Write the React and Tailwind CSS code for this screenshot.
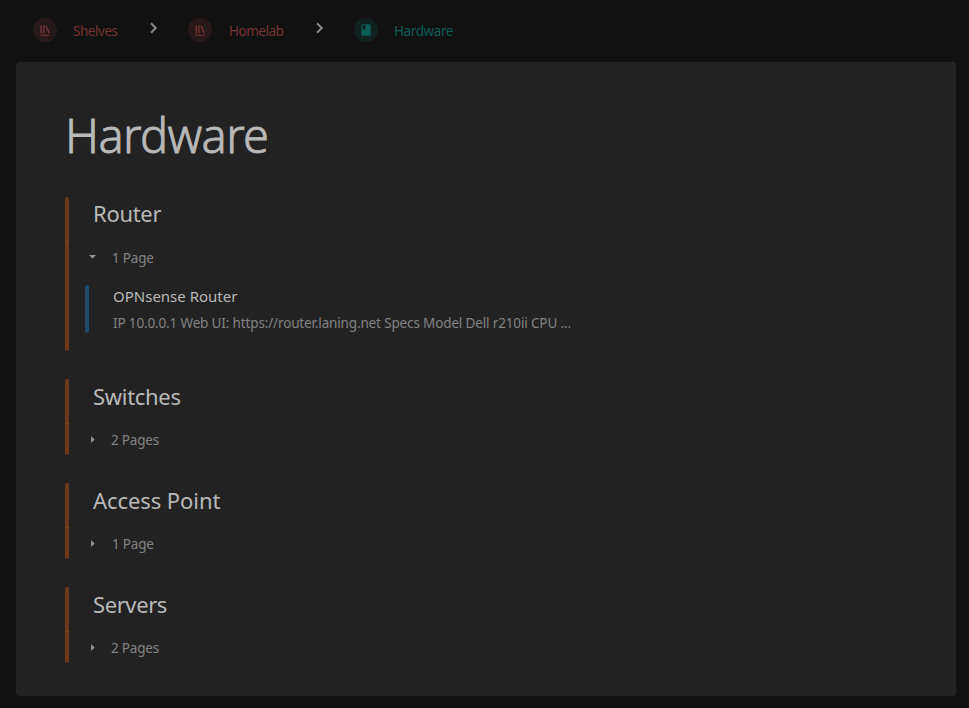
const ShelfIcon = () => (
  <svg viewBox="0 0 24 24" className="size-3.5" fill="currentColor">
    <path d="M4 20.058h15.892V22H4zM6.658 3.643V18h-2.38V3.643zM11.326 3.643V18H8.947V3.643zM14.722 3.856l5.613 13.214-2.19.93-5.613-13.214z" />
  </svg>
);

const BookIcon = () => (
  <svg viewBox="0 0 24 24" className="size-3.5" fill="currentColor">
    <path d="M18 2H6c-1.1 0-2 .9-2 2v16c0 1.1.9 2 2 2h12c1.1 0 2-.9 2-2V4c0-1.1-.9-2-2-2zM6 4h5v8l-2.5-1.5L6 12V4z" />
  </svg>
);

const Chevron = ({ className }) => (
  <svg viewBox="0 0 24 24" className={`h-[22px] w-[21px] -translate-y-0.5 ${className}`} fill="#8c8c8c" stroke="#8c8c8c" strokeWidth="0.4">
    <path d="M10 6 8.59 7.41 13.17 12l-4.58 4.59L10 18l6-6z" />
  </svg>
);

const Crumb = ({ icon, label, color, circle, text }) => (
  <a className={`flex items-center ${color}`}>
    <span className={`flex size-6 items-center justify-center rounded-full ${circle}`}>{icon}</span>
    <span className={`mt-px whitespace-nowrap text-[13.5px] leading-5 ${text}`}>{label}</span>
  </a>
);

const Chapter = ({ title, titleStyle, count, countStyle, open, children }) => (
  <section className="flex">
    <div className="flex w-1 flex-col">
      <div className="h-11 rounded-t-xs bg-[#6d3819]" />
      <div className="h-px bg-[#86400f]" />
      <div className="flex-1 rounded-b-xs bg-[#6d3819]" />
    </div>
    <div className="flex-1">
      <h2 className={`ml-6 h-11 whitespace-nowrap text-[22px] text-[#b9b9b9] ${titleStyle}`}>{title}</h2>
      <div className="ml-[15px] flex h-8 items-center text-[#838383]">
        <svg viewBox="0 0 24 24" className={`size-[17px] ${open ? "-translate-y-px rotate-90" : ""}`} fill="#919191">
          <path d="m10 17 5-5-5-5z" />
        </svg>
        <span className={`mt-0.5 whitespace-nowrap text-[13.5px] leading-5 ${countStyle}`}>{count}</span>
      </div>
      {children}
    </div>
  </section>
);

export default function App() {
  return (
    <div className="h-[708px] w-[969px] overflow-hidden bg-[#111] font-['Noto_Sans','Open_Sans',sans-serif]">
      <nav className="flex h-[62px] items-center pb-0.5 pl-[33px]">
        <Crumb icon={<ShelfIcon />} label="Shelves" color="text-[#773333]" circle="bg-[#271819]" text="ml-4 w-[46px] tracking-[-0.45px]" />
        <Chevron className="ml-6" />
        <Crumb icon={<ShelfIcon />} label="Homelab" color="ml-6 text-[#773333]" circle="bg-[#271819]" text="ml-[17px] w-[55px] tracking-[-0.5px]" />
        <Chevron className="ml-[25px]" />
        <Crumb icon={<BookIcon />} label="Hardware" color="ml-6 text-[#0b5e55]" circle="bg-[#11211f]" text="ml-4 w-[60px] tracking-[-0.4px]" />
      </nav>
      <main className="ml-4 h-[634px] w-[940px] rounded-[3px] bg-[#222] pl-[49px] pt-10">
        <h1 className="h-[95px] whitespace-nowrap text-[47px] font-light leading-[66px] tracking-[-0.6px] text-[#b9b9b9] [-webkit-text-stroke:0.8px_#b9b9b9]">Hardware</h1>
        <div className="flex flex-col gap-7">
          <Chapter title="Router" titleStyle="leading-8 tracking-[-0.3px]" count="1 Page" countStyle="ml-[11px] tracking-[-0.2px]" open>
            <div className="mb-[18px] ml-4 mt-3 flex h-12">
              <div className="w-1 rounded-xs bg-[#214a69]" />
              <div className="ml-6 whitespace-nowrap">
                <h3 className="text-[15px] leading-[22px] text-[#b9b9b9]">OPNsense Router</h3>
                <p className="mt-1 text-[13.5px] leading-6 tracking-[-0.145px] text-[#838383]">
                  IP 10.0.0.1 Web UI: https://router.laning.net Specs Model Dell r210ii CPU ...
                </p>
              </div>
            </div>
          </Chapter>
          <Chapter title="Switches" titleStyle="leading-[34px] tracking-[-0.3px]" count="2 Pages" countStyle="ml-2.5 tracking-[-0.2px]" />
          <Chapter title="Access Point" titleStyle="leading-[34px] tracking-[-0.08px]" count="1 Page" countStyle="ml-[11px] tracking-[-0.2px]" />
          <Chapter title="Servers" titleStyle="leading-[34px] tracking-[-0.4px]" count="2 Pages" countStyle="ml-2.5 tracking-[-0.2px]" />
        </div>
      </main>
    </div>
  );
}
